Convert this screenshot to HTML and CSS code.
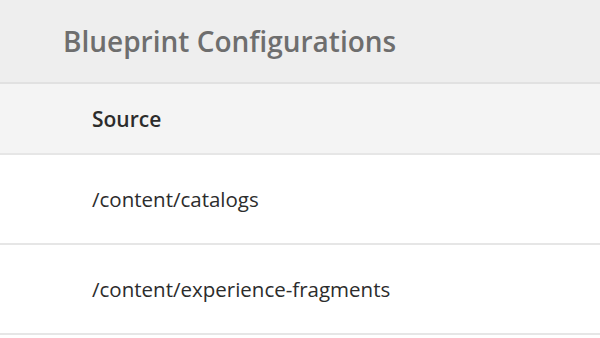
FILE: index.html
```html
<!DOCTYPE html>
<html>
<head>
<meta charset="utf-8">
<link rel="stylesheet" href="styles.css">
</head>
<body>
<header class="page-header">
  <h1 class="title">Blueprint Configurations</h1>
</header>
<div class="table">
  <div class="row head-row"><span class="cell head-cell">Source</span></div>
  <div class="row"><span class="cell">/content/catalogs</span></div>
  <div class="row"><span class="cell">/content/experience-fragments</span></div>
</div>
</body>
</html>
```
FILE: styles.css
```css
html, body {
  margin: 0;
  padding: 0;
  background: #ffffff;
  font-family: "Open Sans", "Lato", sans-serif;
}
.page-header {
  height: 82px;
  background: #eeeeee;
  border-bottom: 2px solid #e1e1e1;
  display: flex;
  align-items: center;
  padding-left: 63px;
}
.title {
  margin: 0;
  font-size: 28px;
  font-weight: 600;
  color: #6e6e6e;
}
.table {
  display: flex;
  flex-direction: column;
}
.row {
  height: 88px;
  display: flex;
  align-items: center;
  padding-left: 92px;
  border-bottom: 2px solid #e6e6e6;
  color: #2c2c2c;
  font-size: 20.5px;
}
.head-row {
  height: 69px;
  background: #f4f4f4;
}
.head-cell {
  font-weight: 600;
  font-size: 21px;
  color: #2c2c2c;
}
```
